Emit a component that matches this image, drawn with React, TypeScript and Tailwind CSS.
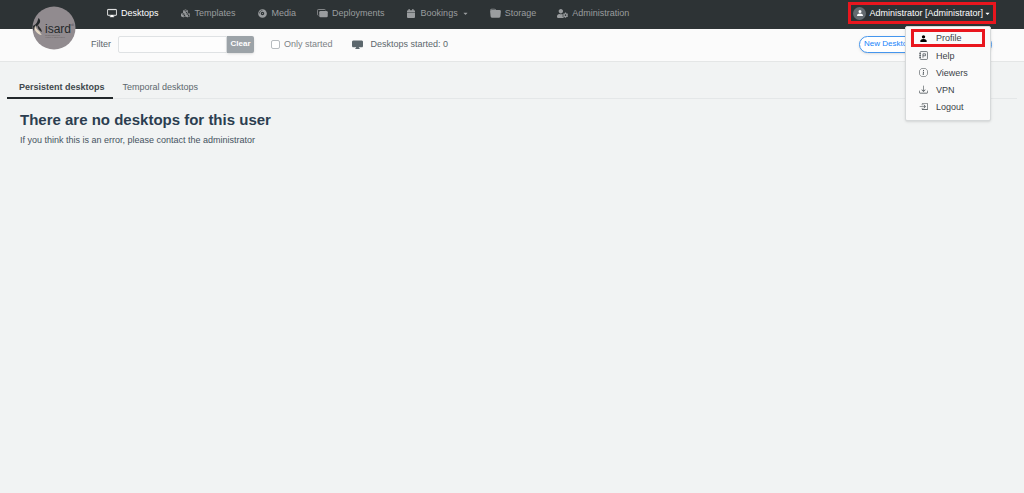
import React from "react";
import {
  BsBoxArrowInRight,
  BsDisplay,
  BsDisplayFill,
  BsDownload,
  BsFolderFill,
  BsInfoCircle,
  BsPersonFill,
} from "react-icons/bs";
import { FaCaretDown, FaCompactDisc, FaCubes, FaUserCog } from "react-icons/fa";

function StackedScreens() {
  return (
    <svg viewBox="0 0 22 18" className="h-[9px] w-[11px]" aria-hidden="true">
      <path d="M3 12.500H2.500A2 2 0 0 1 .8 11V3A2 2 0 0 1 2.800 1H15a2 2 0 0 1 2 1.600" fill="none" stroke="currentColor" strokeWidth="1.600" />
      <rect x="4.500" y="4" width="17" height="12.500" rx="2.500" fill="currentColor" />
    </svg>
  );
}

function CalendarIcon() {
  return (
    <svg viewBox="0 0 16 18" className="h-[9px] w-2" aria-hidden="true" fill="currentColor">
      <path d="M3 0h2.500v2.500h5V0H13v2.500h1a2 2 0 0 1 2 2V6H0V4.500a2 2 0 0 1 2-2h1zM0 7h16v9a2 2 0 0 1-2 2H2a2 2 0 0 1-2-2z" />
    </svg>
  );
}

function HelpIcon() {
  return (
    <svg viewBox="0 0 16 16" className="size-[9px]" aria-hidden="true" fill="none" stroke="currentColor" strokeWidth="1.200">
      <rect x="2" y="1" width="13" height="14" rx="1.500" />
      <path d="M.5 4.500h3M.5 8h3M.5 11.500h3M7 12V5h4.500v3.500H7" />
    </svg>
  );
}

function Logo() {
  return (
    <svg viewBox="0 0 44 44" className="size-11" role="img" aria-label="isard VDI">
      <circle cx="22" cy="22" r="21.500" fill="#918b8f" />
      <path d="M6.500 12C9 14 8.500 17 6 19c-2 2-3.500 3-4.500 6L1 20c2-1 4-3 4.500-5z" fill="#25292b" />
      <path d="M4 19c-1 3 1 4 3 6 1.500 1.500 1.500 3 3 4-3 0-5-2-6.500-4C2 23 2 21 4 19z" fill="#e4d8c5" />
      <path d="M5.500 18c1 3 4 4 4.500 8-2-1-5-3-4.500-8z" fill="#2c2c2c" />
      <text x="13" y="27" fontSize="12" fontFamily="Liberation Sans, sans-serif" fill="#25292b">isard</text>
      <text x="38" y="20" fontSize="3" fontFamily="Liberation Sans, sans-serif" fill="#55535b">vdi</text>
      <text x="13" y="30" fontSize="2" fontFamily="Liberation Sans, sans-serif" fill="#65605f">OPEN SOURCE</text>
      <text x="13" y="32" fontSize="2" fontFamily="Liberation Sans, sans-serif" fill="#65605f">VIRTUAL DESKTOPS</text>
    </svg>
  );
}

const nav = [
  { label: "Desktops", icon: <BsDisplay className="size-[10px] stroke-[0.5]" />, active: true },
  { label: "Templates", icon: <FaCubes className="size-[9px]" /> },
  { label: "Media", icon: <FaCompactDisc className="size-[9px]" /> },
  { label: "Deployments", icon: <StackedScreens /> },
  { label: "Bookings", icon: <CalendarIcon />, menu: true },
  { label: "Storage", icon: <BsFolderFill className="size-[11px]" /> },
  { label: "Administration", icon: <FaUserCog className="size-[11px]" /> },
];

const userMenu = [
  { label: "Profile", icon: <BsPersonFill className="size-[9px] text-black" />, marked: true },
  { label: "Help", icon: <HelpIcon /> },
  { label: "Viewers", icon: <BsInfoCircle className="size-[9px]" /> },
  { label: "VPN", icon: <BsDownload className="size-[9px]" /> },
  { label: "Logout", icon: <BsBoxArrowInRight className="size-[9px]" /> },
];

export default function App() {
  return (
    <div className="flex min-h-screen flex-col bg-[#f1f3f3] font-['Liberation_Sans',Arial,sans-serif] text-[9px] leading-3 text-[#5c676d]">
      <header className="relative flex h-[29px] items-start justify-between bg-[#2d3335] pr-7 pl-[106px]">
        <a href="#home" className="absolute top-[6px] left-8 z-10">
          <Logo />
        </a>
        <nav className="flex h-[26px] items-center gap-[21px]">
          {nav.map((item) => (
            <a
              key={item.label}
              href={"#" + item.label.toLowerCase()}
              className={"flex items-center gap-1 " + (item.active ? "text-white" : "text-[#9a9d9f]")}
            >
              <span className="flex w-[11px] justify-center">{item.icon}</span>
              {item.label}
              {item.menu && <FaCaretDown className="size-[7px]" />}
            </a>
          ))}
        </nav>
        <div className="relative mt-[2px] flex h-[22px] items-center border-[3px] border-[#e9161e] px-[2px]">
          <button className="flex items-center gap-[3px] text-white">
            <span className="flex size-[13px] items-center justify-center rounded-full bg-[#646b70]">
              <BsPersonFill className="size-2" />
            </span>
            Administrator [Administrator]
            <FaCaretDown className="-ml-[2px] size-[7px]" />
          </button>
          <div className="absolute top-[21px] right-[2px] z-20 w-[86px] rounded-[2px] border border-[#d6d9da] bg-[#fafafa] pt-[2px] pb-[5px] shadow-sm">
            <ul>
              {userMenu.map((item) => (
                <li key={item.label}>
                  <a
                    href={"#" + item.label.toLowerCase()}
                    className={
                      "mx-[5px] flex items-center gap-2 text-[#3a4247] " +
                      (item.marked ? "h-[18px] border-[3px] border-[#e9161e] pl-[5px]" : "h-[17px] pl-2")
                    }
                  >
                    {item.icon}
                    {item.label}
                  </a>
                </li>
              ))}
            </ul>
          </div>
        </div>
      </header>

      <section className="flex h-[33px] items-center border-b border-[#e4e6e6] bg-[#fbfbfb] pr-8 pb-[2px] pl-[91px]">
        <label htmlFor="filter" className="mr-[7px]">Filter</label>
        <input id="filter" className="h-[17px] w-[109px] rounded-l-[2px] border border-[#dfe2e4] bg-[#fdfdfd] px-1 outline-none" />
        <button className="h-[17px] w-[27px] rounded-r-[2px] bg-[#9ca3a8] text-[8px] font-bold text-white shadow-sm">Clear</button>
        <label className="ml-[17px] flex items-center gap-1 text-[#7b8286]">
          <input type="checkbox" className="size-[9px] appearance-none rounded-[2px] border border-[#b7bcc0] bg-white" />
          Only started
        </label>
        <BsDisplayFill className="ml-[19px] size-[11px]" />
        <span className="ml-2">Desktops started: 0</span>
        <button className="ml-auto h-[17px] w-[133px] rounded-full border border-[#4596ee] bg-white pl-1 text-left text-[8px] text-[#1683fa] shadow-sm">
          New Desktop
        </button>
      </section>

      <main className="px-[7px] pt-[14px]">
        <div role="tablist" className="flex border-b border-[#e4e7e8]">
          <button role="tab" aria-selected="true" className="-mb-px h-[23px] border-b-2 border-[#22282b] pr-2 pl-3 font-bold text-[#3f484d]">
            Persistent desktops
          </button>
          <button role="tab" aria-selected="false" className="h-[22px] px-[10px]">
            Temporal desktops
          </button>
        </div>
        <div className="px-[13px] pt-[11px]">
          <h1 className="text-[15px] leading-5 font-bold text-[#2c3e50]">There are no desktops for this user</h1>
          <p className="mt-1 text-[#45525e]">If you think this is an error, please contact the administrator</p>
        </div>
      </main>
    </div>
  );
}
